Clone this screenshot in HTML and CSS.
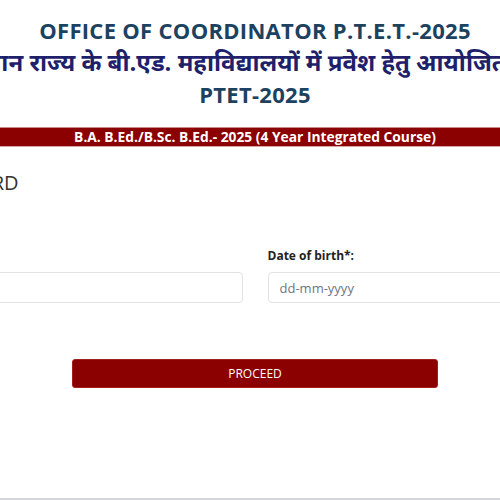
FILE: index.html
```html
<!DOCTYPE html>
<html lang="en">
<head>
<meta charset="utf-8">
<title>PTET-2025</title>
<link rel="stylesheet" href="styles.css">
</head>
<body>
<div class="page">
  <header class="masthead">
    <h1 class="title">OFFICE OF COORDINATOR P.T.E.T.-2025</h1>
    <h2 class="title-hi">राजस्थान राज्य के बी.एड. महाविद्यालयों में प्रवेश हेतु आयोजित परीक्षा</h2>
    <h2 class="title-sub">PTET-2025</h2>
  </header>
  <div class="course-bar">B.A. B.Ed./B.Sc. B.Ed.- 2025 (4 Year Integrated Course)</div>
  <main class="form-wrap">
    <h3 class="form-title">ADMIT CARD</h3>
    <form class="form">
      <div class="row">
        <div class="field">
          <label class="label">Form No.*:</label>
          <input class="input" type="text">
        </div>
        <div class="field">
          <label class="label">Date of birth*:</label>
          <input class="input" type="text" placeholder="dd-mm-yyyy">
        </div>
      </div>
      <div class="actions">
        <button class="btn" type="button">PROCEED</button>
      </div>
    </form>
  </main>
  <div class="footer-line"></div>
</div>
</body>
</html>
```

FILE: styles.css
```css
html, body {
  margin: 0;
  padding: 0;
  background: #fff;
  overflow: hidden;
  height: 500px;
}
body {
  font-family: "Open Sans", "Noto Sans", sans-serif;
  color: #333;
}
.page {
  width: 1010px;
  margin-left: -250px;
  height: 500px;
  display: flex;
  flex-direction: column;
}
.masthead {
  text-align: center;
  padding-top: 18px;
}
.title {
  margin: 0;
  font-size: 22px;
  line-height: 24px;
  font-weight: 700;
  letter-spacing: 0.3px;
  color: #1c4260;
}
.title-hi {
  margin: 0;
  font-size: 24px;
  line-height: 40px;
  font-weight: 700;
  color: #1f1f6b;
  white-space: nowrap;
}
.title-sub {
  margin: 0;
  font-size: 22px;
  line-height: 24px;
  font-weight: 700;
  letter-spacing: 0.3px;
  color: #1c4260;
}
.course-bar {
  margin-top: 21px;
  background: #8b0000;
  border-top: 1px solid #c98a8a;
  border-bottom: 1px solid #d9a5a5;
  color: #fff;
  font-weight: 700;
  font-size: 13.8px;
  line-height: 18px;
  text-align: center;
}
.form-wrap {
  width: 711px;
  margin: 0 auto;
  flex: 1;
}
.form-title {
  margin: 24px 0 0;
  font-size: 20px;
  line-height: 24px;
  font-weight: 400;
  color: #333;
}
.form {
  margin-top: 53px;
}
.row {
  display: grid;
  grid-template-columns: 1fr 1fr;
  column-gap: 25px;
}
.field {
  display: flex;
  flex-direction: column;
}
.label {
  font-size: 12px;
  font-weight: 700;
  color: #222;
  line-height: 16px;
  margin-bottom: 8px;
}
.input {
  box-sizing: border-box;
  height: 31px;
  border: 1px solid #e2e2e2;
  border-radius: 4px;
  padding: 0 11px;
  font-family: "Open Sans", sans-serif;
  font-size: 13px;
  color: #555;
}
.input::placeholder {
  color: #6b7785;
}
.actions {
  display: flex;
  justify-content: center;
  margin-top: 56px;
}
.btn {
  width: 366px;
  height: 29px;
  background: #8b0000;
  border: 1px solid #a02020;
  border-radius: 3px;
  color: #fff;
  font-family: "Open Sans", sans-serif;
  font-size: 12px;
  padding: 0;
}
.footer-line {
  height: 2px;
  background: #d3d5dd;
}
```
